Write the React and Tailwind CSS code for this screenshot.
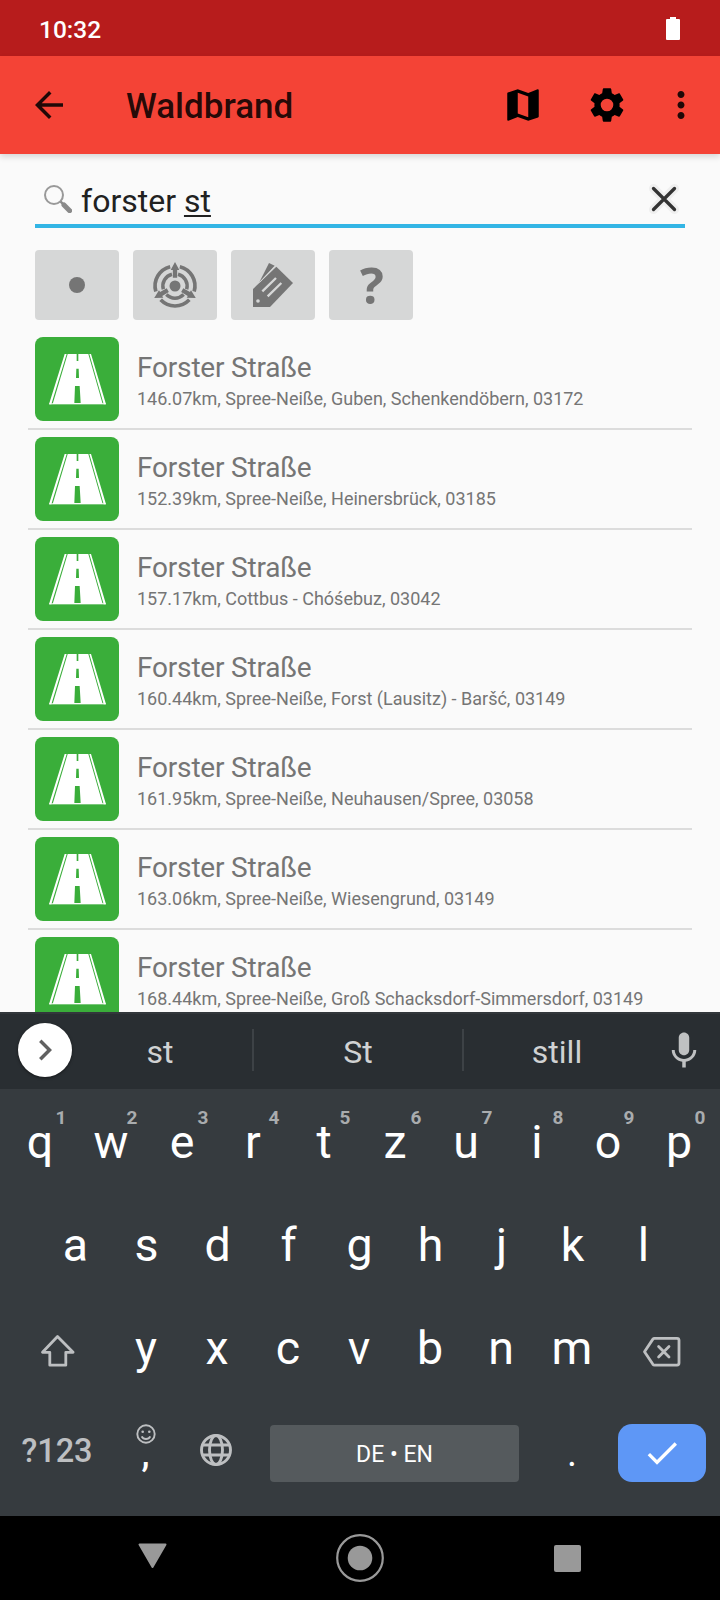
import React from "react";

const results = [
  "146.07km, Spree-Neiße, Guben, Schenkendöbern, 03172",
  "152.39km, Spree-Neiße, Heinersbrück, 03185",
  "157.17km, Cottbus - Chóśebuz, 03042",
  "160.44km, Spree-Neiße, Forst (Lausitz) - Baršć, 03149",
  "161.95km, Spree-Neiße, Neuhausen/Spree, 03058",
  "163.06km, Spree-Neiße, Wiesengrund, 03149",
  "168.44km, Spree-Neiße, Groß Schacksdorf-Simmersdorf, 03149",
];

function Icon({ d, className }) {
  return (
    <svg viewBox="0 0 24 24" className={className} fill="currentColor">
      <path d={d} />
    </svg>
  );
}

const paths = {
  back: "M20 11H7.83l5.59-5.59L12 4l-8 8 8 8 1.41-1.41L7.83 13H20v-2z",
  map: "M20.5 3l-.16.03L15 5.1 9 3 3.36 4.9c-.21.07-.36.25-.36.48V20.5c0 .28.22.5.5.5l.16-.03L9 18.9l6 2.1 5.64-1.9c.21-.07.36-.25.36-.48V3.5c0-.28-.22-.5-.5-.5zM15 19l-6-2.11V5l6 2.11V19z",
  gear: "M19.14 12.94c.04-.3.06-.61.06-.94 0-.32-.02-.64-.07-.94l2.03-1.58c.18-.14.23-.41.12-.61l-1.92-3.32c-.12-.22-.37-.29-.59-.22l-2.39.96c-.5-.38-1.03-.7-1.62-.94l-.36-2.54c-.04-.24-.24-.41-.48-.41h-3.84c-.24 0-.43.17-.47.41l-.36 2.54c-.59.24-1.13.57-1.62.94l-2.39-.96c-.22-.08-.47 0-.59.22L2.74 8.87c-.12.21-.08.47.12.61l2.03 1.58c-.05.3-.09.63-.09.94s.02.64.07.94l-2.03 1.58c-.18.14-.23.41-.12.61l1.92 3.32c.12.22.37.29.59.22l2.39-.96c.5.38 1.03.7 1.62.94l.36 2.54c.05.24.24.41.48.41h3.84c.24 0 .44-.17.47-.41l.36-2.54c.59-.24 1.13-.56 1.62-.94l2.39.96c.22.08.47 0 .59-.22l1.92-3.32c.12-.22.07-.47-.12-.61l-2.01-1.58zM12 15.6A3.6 3.6 0 1 1 12 8.400a3.6 3.6 0 0 1 0 7.200z",
  more: "M12 8c1.1 0 2-.9 2-2s-.9-2-2-2-2 .9-2 2 .9 2 2 2zm0 2c-1.1 0-2 .9-2 2s.9 2 2 2 2-.9 2-2-.9-2-2-2zm0 6c-1.1 0-2 .9-2 2s.9 2 2 2 2-.9 2-2-.9-2-2-2z",
  mic: "M12 15c1.66 0 2.99-1.34 2.99-3L15 5c0-1.66-1.34-3-3-3S9 3.34 9 5v7c0 1.66 1.34 3 3 3zm5.3-3c0 3-2.54 5.1-5.3 5.1S6.7 15 6.7 12H5c0 3.42 2.72 6.23 6 6.72V22h2v-3.28c3.28-.48 6-3.3 6-6.72h-1.7z",
  chevron: "M10 6L8.59 7.41 13.17 12l-4.58 4.59L10 18l6-6z",
  check: "M9 16.17L4.83 12l-1.42 1.41L9 19 21 7l-1.41-1.41z",
};

function StatusBar() {
  return (
    <div className="flex h-14 items-center justify-between bg-[#b71c1c] pl-[39px] pr-10 text-white">
      <span className="pt-[4px] text-[24.5px] font-medium leading-none">10:32</span>
      <svg className="h-[23px] w-[14px]" viewBox="0 0 14 23" fill="currentColor">
        <path d="M4 0h6v2h3a1 1 0 0 1 1 1v19a1 1 0 0 1-1 1H1a1 1 0 0 1-1-1V3a1 1 0 0 1 1-1h3z" />
      </svg>
    </div>
  );
}

function Toolbar() {
  return (
    <header className="relative z-10 flex h-[98px] items-center bg-[#f44336] pl-7 pr-[18px] shadow-[0_3px_6px_rgba(0,0,0,0.14)]">
      <Icon d={paths.back} className="h-[42px] w-[42px] text-black/87" />
      <h1 className="ml-14 flex-1 pt-[2px] text-[35px] font-medium leading-none text-black/87">Waldbrand</h1>
      <Icon d={paths.map} className="h-[42px] w-[42px] text-black" />
      <Icon d={paths.gear} className="ml-[42px] h-[42px] w-[42px] text-black" />
      <Icon d={paths.more} className="ml-[32px] h-[42px] w-[42px] text-black/87" />
    </header>
  );
}

function SearchField() {
  return (
    <div className="mx-[35px] mt-5 flex h-[54px] shrink-0 items-center border-b-4 border-[#33b5e5] pl-[9px] pr-[5px]">
      <svg className="h-[28px] w-[28px]" viewBox="0 0 84 84" fill="none">
        <circle cx="30" cy="30" r="27" stroke="#999" strokeWidth="6" />
        <path d="M50 50l12 12" stroke="#8a8a8a" strokeWidth="7" />
        <path d="M60 60l17 17" stroke="#8a8a8a" strokeWidth="15" strokeLinecap="round" />
      </svg>
      <div className="ml-[9px] flex-1 pt-[3px] text-[32px] leading-none text-[#212121]">
        forster <span className="underline decoration-2 underline-offset-[3px] [text-decoration-skip-ink:none]">st</span>
      </div>
      <svg className="h-[32px] w-[32px]" viewBox="0 0 32 32" fill="none" strokeLinecap="round">
        <path d="M5.500 5.500l21 21M26.500 5.500l-21 21" stroke="#efefef" strokeWidth="9" />
        <path d="M5.500 5.500l21 21M26.500 5.500l-21 21" stroke="#333" strokeWidth="3.300" />
      </svg>
    </div>
  );
}

function FilterButton({ children }) {
  return (
    <button className="flex h-[70px] w-[84px] items-center justify-center rounded-[4px] bg-[#d6d7d7] text-[#757575]">
      {children}
    </button>
  );
}

function RadarSector({ angle }) {
  return (
    <g transform={`rotate(${angle} 126 108)`}>
      <path d="M126 36l13 24h-6.500v23h-13V60H113z" fill="currentColor" />
      <path d="M83 149.500A59.500 59.500 0 0 0 169 149.500" stroke="currentColor" strokeWidth="11" fill="none" />
      <path d="M100 133.500A36.500 36.500 0 0 0 152 133.500" stroke="currentColor" strokeWidth="10.500" fill="none" />
    </g>
  );
}

function Filters() {
  return (
    <div className="mx-[35px] mt-[22px] flex shrink-0 gap-[14px]">
      <FilterButton>
        <span className="h-4 w-4 rounded-full bg-[#757575]" />
      </FilterButton>
      <FilterButton>
        <svg className="h-[70px] w-[84px]" viewBox="0 0 252 210">
          <circle cx="126" cy="108" r="16.500" fill="currentColor" />
          <RadarSector angle={0} />
          <RadarSector angle={120} />
          <RadarSector angle={240} />
        </svg>
      </FilterButton>
      <FilterButton>
        <svg className="h-[70px] w-[84px]" viewBox="0 0 252 210">
          <path d="M85 97l29-58 17 8-9 10z" fill="currentColor" />
          <path d="M66 171v-54l70-67 50 49-69 72z" fill="currentColor" />
          <path d="M86 97l44-46" stroke="#d6d7d7" strokeWidth="2.500" />
          <circle cx="81" cy="153" r="5.500" fill="#d6d7d7" />
          <path d="M94 124l41-40M110 139l41-40" stroke="#d6d7d7" strokeWidth="7" />
        </svg>
      </FilterButton>
      <FilterButton>
        <span className="pl-[2px] font-['Open_Sans'] text-[50px] font-bold leading-none">?</span>
      </FilterButton>
    </div>
  );
}

function RoadIcon() {
  return (
    <svg className="h-[84px] w-[84px]" viewBox="0 0 252 252">
      <rect width="252" height="252" rx="24" fill="#3aae3a" />
      <path d="M89 51h6L49 202h-7zM163 51h5l45 151h-7z" fill="#fff" />
      <path d="M98 51h62l43 150H53z" fill="#fff" />
      <path d="M43 200.500h169" stroke="#fff" strokeWidth="3" />
      <path d="M125 51h5v21h-5zM124 95h7l1 28h-9zM120 147h14l3 51h-19z" fill="#3aae3a" />
    </svg>
  );
}

function ResultRow({ detail }) {
  return (
    <li className="mx-7 flex h-[100px] shrink-0 border-b-2 border-[#dcdcdc] px-[7px] pt-[7px]">
      <RoadIcon />
      <div className="ml-[18px] flex flex-col pt-[14px] text-[#757575]">
        <span className="text-[28px] leading-[33px] tracking-[-0.18px]">Forster Straße</span>
        <span className="mt-[4px] whitespace-nowrap text-[18px] leading-[21px]">{detail}</span>
      </div>
    </li>
  );
}

function Suggestions() {
  return (
    <div className="flex h-[77px] items-center border-t-2 border-[#32373b] bg-[#292e32] pb-[3px] pl-[18px] text-[32px] leading-none text-[#d0d2d3]">
      <div className="flex h-[54px] w-[54px] items-center justify-center rounded-full bg-white text-[#616161] shadow-[0_1px_3px_rgba(0,0,0,0.5)]">
        <Icon d={paths.chevron} className="h-[42px] w-[42px]" />
      </div>
      <span className="ml-[-4px] w-[184px] pt-[4px] text-center">st</span>
      <span className="h-[42px] w-[2px] bg-[#3d4246]" />
      <span className="w-[208px] pt-[4px] text-center">St</span>
      <span className="h-[42px] w-[2px] bg-[#3d4246]" />
      <span className="w-[186px] pt-[4px] text-center">still</span>
      <Icon d={paths.mic} className="ml-[13px] h-[42px] w-[42px] text-[#bfc1c2]" />
    </div>
  );
}

function Key({ label, hint }) {
  return (
    <div className="relative flex h-[103px] w-[71px] shrink-0 items-center justify-center text-[46.5px] leading-none text-white">
      {label}
      {hint && (
        <span className="absolute left-[51px] top-[16px] text-[19px] font-bold leading-[22px] text-[#a9acae]">{hint}</span>
      )}
    </div>
  );
}

function Keyboard() {
  return (
    <section className="h-[427px] bg-[#363b3f] pt-[2px]">
      <div className="flex pl-[4.500px]">
        {"qwertzuiop".split("").map((letter, i) => (
          <Key key={letter} label={letter} hint={String((i + 1) % 10)} />
        ))}
      </div>
      <div className="flex pl-[40px]">
        {"asdfghjkl".split("").map((letter) => (
          <Key key={letter} label={letter} />
        ))}
      </div>
      <div className="flex items-center pl-[4.500px]">
        <div className="flex w-[106px] justify-center">
          <svg className="mt-[4px] h-[34px] w-[36px]" viewBox="0 0 36 34" fill="none" stroke="#bdbfc1" strokeWidth="2.800" strokeLinejoin="round">
            <path d="M17.500 2.500L2.500 18.300h7.300v12.900h16V18.300h7.300z" />
          </svg>
        </div>
        {"yxcvbnm".split("").map((letter) => (
          <Key key={letter} label={letter} />
        ))}
        <svg className="ml-[34.500px] mt-[7px] h-[32px] w-[40px]" viewBox="0 0 40 32" fill="none" stroke="#bdbfc1" strokeWidth="2.800" strokeLinejoin="round" strokeLinecap="round">
          <path d="M12.500 2.300h22.500a2 2 0 0 1 2 2v22.800a2 2 0 0 1-2 2H12.500a2 2 0 0 1-1.600-.8L2.500 15.700l8.400-12.600a2 2 0 0 1 1.600-.8z" />
          <path d="M16.600 10.500l10.400 10.400M27 10.500L16.600 20.900" />
        </svg>
      </div>
      <div className="-mt-px flex h-[103px]">
        <div className="flex w-[114px] justify-center pt-[36px] text-[32.500px] font-medium leading-none text-[#bdbfc1]">?123</div>
        <div className="flex w-[62px] flex-col items-center pl-px pt-[25px]">
          <svg className="h-[20px] w-[20px]" viewBox="0 0 20 20" fill="none" stroke="#bdbfc1" strokeWidth="1.900">
            <circle cx="10" cy="10" r="8.700" />
            <circle cx="6.700" cy="7.700" r="1.300" fill="#bdbfc1" stroke="none" />
            <circle cx="13.300" cy="7.700" r="1.300" fill="#bdbfc1" stroke="none" />
            <path d="M5.700 12.300a4.800 4.800 0 0 0 8.600 0" />
          </svg>
          <span className="-mt-[8px] text-[36px] font-medium leading-[36px] text-white">,</span>
        </div>
        <svg className="ml-[24px] mt-[35px] h-[32px] w-[32px]" viewBox="0 0 32 32" fill="none" stroke="#bdbfc1" strokeWidth="2.900">
          <circle cx="16" cy="16" r="14.500" />
          <ellipse cx="16" cy="16" rx="6.500" ry="14.500" />
          <path d="M2.600 11h26.800M2.600 21h26.800" />
        </svg>
        <div className="ml-[38px] mt-[26px] flex h-[57px] w-[249px] items-center justify-center rounded-[4px] bg-[#555a5d] text-[23px] leading-none text-white">
          <span className="pt-px">DE • EN</span>
        </div>
        <span className="w-[99px] pl-[7px] pt-[35px] text-center text-[38px] leading-none text-white">.</span>
        <div className="mt-[25px] flex h-[58px] w-[88px] items-center justify-center rounded-[14px] bg-[#5e97f6]">
          <Icon d={paths.check} className="h-[40px] w-[40px] text-white" />
        </div>
      </div>
    </section>
  );
}

function NavBar() {
  return (
    <nav className="flex h-[84px] items-center bg-black pl-[138px] text-[#999]">
      <svg className="-mt-[5px] h-[26px] w-[29px]" viewBox="0 0 29 26" fill="currentColor" stroke="currentColor" strokeWidth="2" strokeLinejoin="round">
        <path d="M1.500 1.500h26L14.500 24z" />
      </svg>
      <svg className="ml-[169px] h-[48px] w-[48px]" viewBox="0 0 48 48" fill="none">
        <circle cx="24" cy="24" r="22.800" stroke="currentColor" strokeWidth="2.200" />
        <circle cx="24" cy="24" r="12.300" fill="currentColor" />
      </svg>
      <span className="ml-[170px] mt-px h-[27px] w-[27px] rounded-[2px] bg-[#999]" />
    </nav>
  );
}

export default function App() {
  return (
    <div className="flex h-[1600px] w-[720px] flex-col overflow-hidden bg-[#fafafa] font-[Roboto,sans-serif]">
      <StatusBar />
      <Toolbar />
      <main className="flex h-[858px] shrink-0 flex-col overflow-hidden">
        <SearchField />
        <Filters />
        <ul className="mt-[10px] flex shrink-0 flex-col">
          {results.map((detail) => (
            <ResultRow key={detail} detail={detail} />
          ))}
        </ul>
      </main>
      <Suggestions />
      <Keyboard />
      <NavBar />
    </div>
  );
}
